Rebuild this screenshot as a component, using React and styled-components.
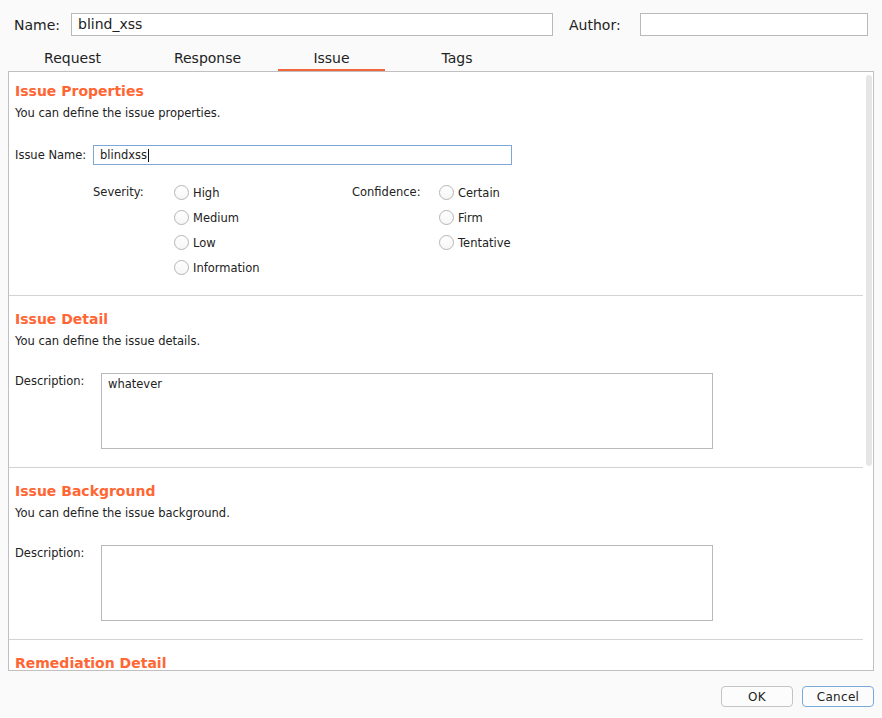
import React from "react";
import styled, { createGlobalStyle } from "styled-components";

const GlobalStyle = createGlobalStyle`
  html, body { margin: 0; padding: 0; background: #fafafa; }
  body { font-family: "DejaVu Sans", "Noto Sans", sans-serif; color: #222; }
  * { box-sizing: border-box; }
`;

const Page = styled.div`
  width: 882px;
  height: 718px;
  padding: 13px 8px 0;
  display: flex;
  flex-direction: column;
  background: #fafafa;
`;

const TopRow = styled.div`
  display: flex;
  align-items: center;
  height: 23px;
  padding: 0 6px;
`;

const TopLabel = styled.span`
  flex-shrink: 0;
  width: ${(p) => p.$w}px;
  margin-left: ${(p) => p.$ml || 0}px;
  padding-top: 1px;
  font-size: 14px;
  line-height: 17px;
`;

const TextField = styled.div`
  flex-shrink: 0;
  width: ${(p) => p.$w}px;
  height: 23px;
  border: 1px solid #b9b9b9;
  background: #fff;
  font-size: 14px;
  line-height: 21px;
  padding: 0 6px;
`;

const Tabs = styled.div`
  display: flex;
  margin-top: 10px;
`;

const Tab = styled.div`
  width: ${(p) => p.$w}px;
  height: 25px;
  padding-top: 4px;
  line-height: 17px;
  font-size: 14px;
  text-align: center;
  border-bottom: 2px solid ${(p) => (p.$active ? "#f2683c" : "transparent")};
`;

const Panel = styled.div`
  position: relative;
  height: 600px;
  border: 1px solid #c2bfc2;
  background: #fff;
  overflow: hidden;
`;

const Scrollbar = styled.div`
  position: absolute;
  top: 3px;
  right: 1px;
  width: 6px;
  height: 391px;
  border-radius: 3px;
  background: #e6e6e6;
`;

const Section = styled.div`
  margin-right: 10px;
  padding: ${(p) => p.$pt}px 0 ${(p) => p.$pb}px 6px;
  border-bottom: 1px solid #d3d3d3;
`;

const Title = styled.div`
  font-size: 14px;
  font-weight: bold;
  line-height: 18px;
  color: #ff6633;
  white-space: nowrap;
`;

const Subtitle = styled.div`
  margin-top: 6px;
  font-size: 11.5px;
  line-height: 15px;
`;

const NameRow = styled.div`
  display: flex;
  align-items: center;
  margin-top: 24px;
  height: 20px;
`;

const SmallLabel = styled.span`
  flex-shrink: 0;
  width: ${(p) => p.$w}px;
  font-size: 11.5px;
  line-height: ${(p) => p.$lh || 14}px;
`;

const FocusField = styled.div`
  width: 419px;
  height: 20px;
  border: 1px solid #7ea6d8;
  background: #fff;
  padding: 0 6px;
  font-size: 11.5px;
  line-height: 18px;
  display: flex;
  align-items: center;
`;

const Caret = styled.span`
  display: inline-block;
  width: 1px;
  height: 13px;
  background: #111;
  margin-left: 1px;
`;

const RadioArea = styled.div`
  display: flex;
  margin-top: 15px;
  margin-left: 78px;
`;

const RadioGroup = styled.div`
  display: flex;
  align-items: flex-start;
`;

const RadioList = styled.div`
  width: ${(p) => p.$w}px;
  display: flex;
  flex-direction: column;
`;

const RadioRow = styled.div`
  display: flex;
  align-items: center;
  height: 25px;
  font-size: 11.5px;
`;

const Circle = styled.span`
  width: 15px;
  height: 15px;
  border-radius: 50%;
  border: 1px solid #b5b5b5;
  background: linear-gradient(#ffffff, #f6f6f6);
  margin-right: 4px;
  flex-shrink: 0;
`;

const DescRow = styled.div`
  display: flex;
  align-items: flex-start;
  margin-top: 24px;
`;

const TextArea = styled.div`
  width: 612px;
  height: 76px;
  border: 1px solid #bcb7bc;
  background: #fff;
  padding: 3px 6px;
  font-size: 11.5px;
  line-height: 14px;
`;

const DescLabel = styled.span`
  flex-shrink: 0;
  width: 86px;
  padding-top: 1px;
  font-size: 11.5px;
  line-height: 14px;
`;

const Footer = styled.div`
  display: flex;
  justify-content: flex-end;
  gap: 9px;
  margin-top: 15px;
`;

const Button = styled.button`
  width: 72px;
  height: 21px;
  border: 1px solid ${(p) => (p.$focused ? "#7aaada" : "#c4c4c4")};
  border-radius: 4px;
  background: #fcfcfc;
  font-family: "DejaVu Sans", sans-serif;
  font-size: 12px;
  color: #222;
  padding: 0;
  letter-spacing: 0.3px;
`;

const Radio = ({ label }) => (
  <RadioRow>
    <Circle />
    {label}
  </RadioRow>
);

const DescSection = ({ title, subtitle, text }) => (
  <Section $pt={14} $pb={18}>
    <Title>{title}</Title>
    <Subtitle>{subtitle}</Subtitle>
    <DescRow>
      <DescLabel>Description:</DescLabel>
      <TextArea>{text}</TextArea>
    </DescRow>
  </Section>
);

export default function App() {
  return (
    <>
      <GlobalStyle />
      <Page>
        <TopRow>
          <TopLabel $w={57}>Name:</TopLabel>
          <TextField $w={482}>blind_xss</TextField>
          <TopLabel $w={71} $ml={16}>Author:</TopLabel>
          <TextField $w={228} />
        </TopRow>
        <Tabs>
          <Tab $w={129}>Request</Tab>
          <Tab $w={141}>Response</Tab>
          <Tab $w={107} $active>Issue</Tab>
          <Tab $w={144}>Tags</Tab>
        </Tabs>
        <Panel>
          <Section $pt={10} $pb={15}>
            <Title>Issue Properties</Title>
            <Subtitle>You can define the issue properties.</Subtitle>
            <NameRow>
              <SmallLabel $w={78}>Issue Name:</SmallLabel>
              <FocusField>
                blindxss
                <Caret />
              </FocusField>
            </NameRow>
            <RadioArea>
              <RadioGroup>
                <SmallLabel $w={81} $lh={25}>Severity:</SmallLabel>
                <RadioList $w={178}>
                  <Radio label="High" />
                  <Radio label="Medium" />
                  <Radio label="Low" />
                  <Radio label="Information" />
                </RadioList>
              </RadioGroup>
              <RadioGroup>
                <SmallLabel $w={87} $lh={25}>Confidence:</SmallLabel>
                <RadioList $w={120}>
                  <Radio label="Certain" />
                  <Radio label="Firm" />
                  <Radio label="Tentative" />
                </RadioList>
              </RadioGroup>
            </RadioArea>
          </Section>
          <DescSection
            title="Issue Detail"
            subtitle="You can define the issue details."
            text="whatever"
          />
          <DescSection
            title="Issue Background"
            subtitle="You can define the issue background."
            text=""
          />
          <Section $pt={14} $pb={0}>
            <Title>Remediation Detail</Title>
          </Section>
          <Scrollbar />
        </Panel>
        <Footer>
          <Button>OK</Button>
          <Button $focused>Cancel</Button>
        </Footer>
      </Page>
    </>
  );
}
